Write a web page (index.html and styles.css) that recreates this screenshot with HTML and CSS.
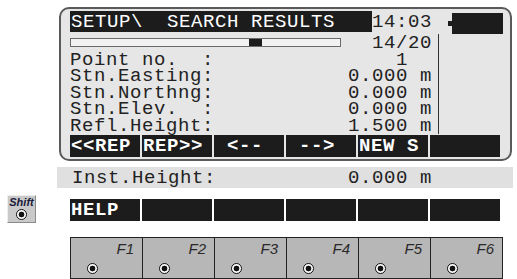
FILE: index.html
```html
<!DOCTYPE html>
<html lang="en">
<head>
  <meta charset="UTF-8">
  <title>Setup - Search Results</title>
  <link rel="stylesheet" href="styles.css">
</head>
<body>
  <div class="page">
    <section class="lcd">
      <div class="lcd-top">
        <div class="lcd-text">
          <div class="title-row">
            <div class="title">SETUP\  SEARCH RESULTS</div>
            <div class="clock">14:03</div>
          </div>
          <div class="row">
            <div class="progress"><span class="progress-mark" style="margin-left: 178px;"></span></div>
            <span>14/20</span>
          </div>
          <div class="row"><span>Point no.  :</span><span>1  </span></div>
          <div class="row"><span>Stn.Easting:</span><span>0.000 m</span></div>
          <div class="row"><span>Stn.Northng:</span><span>0.000 m</span></div>
          <div class="row"><span>Stn.Elev.  :</span><span>0.000 m</span></div>
          <div class="row"><span>Refl.Height:</span><span>1.500 m</span></div>
        </div>
        <div class="lcd-side">
          <div class="battery"><span class="battery-nub"></span><span class="battery-body"></span></div>
          <div class="side-line"></div>
        </div>
      </div>
      <div class="softkeys">
        <div class="softkey">&lt;&lt;REP</div>
        <div class="softkey">REP&gt;&gt;</div>
        <div class="softkey"> &lt;--</div>
        <div class="softkey"> --&gt;</div>
        <div class="softkey">NEW S</div>
        <div class="softkey"></div>
      </div>
    </section>

    <div class="inst-row">
      <div class="inst-text"><span>Inst.Height:</span><span>0.000 m</span></div>
    </div>

    <div class="shift-row">
      <div class="shift-key">
        <span class="shift-label">Shift</span>
        <i class="dot"></i>
      </div>
      <div class="softkeys help-keys">
        <div class="softkey">HELP</div>
        <div class="softkey"></div>
        <div class="softkey"></div>
        <div class="softkey"></div>
        <div class="softkey"></div>
        <div class="softkey"></div>
      </div>
    </div>

    <div class="fkeys">
      <div class="fkey"><span class="fkey-label">F1</span><i class="dot"></i></div>
      <div class="fkey"><span class="fkey-label">F2</span><i class="dot"></i></div>
      <div class="fkey"><span class="fkey-label">F3</span><i class="dot"></i></div>
      <div class="fkey"><span class="fkey-label">F4</span><i class="dot"></i></div>
      <div class="fkey"><span class="fkey-label">F5</span><i class="dot"></i></div>
      <div class="fkey"><span class="fkey-label">F6</span><i class="dot"></i></div>
    </div>
  </div>
</body>
</html>
```

FILE: styles.css
```css
* {
  margin: 0;
  padding: 0;
  box-sizing: border-box;
}

body {
  background: #ffffff;
  font-family: 'Liberation Mono', 'DejaVu Sans Mono', monospace;
  font-size: 19px;
  letter-spacing: 0.6px;
  color: #222;
}

.page {
  padding-top: 7px;
  width: 517px;
  height: 279px;
  overflow: hidden;
}

.lcd {
  margin-left: 59px;
  width: 453px;
  height: 154px;
  padding: 2px 0 0 9px;
  border: 2px solid #5a5a5a;
  border-radius: 10px;
  background: #e6e6e6;
}

.lcd-top {
  display: flex;
}

.lcd-text {
  width: 362px;
}

.title-row {
  display: flex;
  height: 21px;
  margin-bottom: 3px;
  line-height: 23px;
  white-space: pre;
}

.title {
  width: 302px;
  padding-left: 1px;
  background: #1c1c1c;
  color: #fff;
}

.clock {
  flex: 1;
  text-align: right;
}

.row {
  display: flex;
  justify-content: space-between;
  height: 16.5px;
  line-height: 16.5px;
  white-space: pre;
}

.progress {
  display: flex;
  align-self: flex-start;
  width: 271px;
  height: 9px;
  margin-top: 3px;
  border: 1px solid #6a6a6a;
  background: #f2f2f2;
}

.progress-mark {
  width: 13px;
  background: #1c1c1c;
}

.lcd-side {
  display: flex;
  flex-direction: column;
}

.battery {
  display: flex;
  align-items: center;
  height: 21px;
  margin: 2px 0 0 16px;
}

.battery-nub {
  width: 4px;
  height: 5px;
  background: #1c1c1c;
}

.battery-body {
  width: 51px;
  height: 21px;
  background: #1c1c1c;
}

.side-line {
  width: 1px;
  height: 100px;
  margin-left: 6px;
  background: #333;
}

.softkeys {
  display: grid;
  grid-template-columns: repeat(6, 70px);
  gap: 2px;
  height: 21px;
  margin-top: 1px;
}

.softkey {
  background: #1c1c1c;
  color: #fff;
  font-weight: bold;
  line-height: 22px;
  padding-left: 1px;
  white-space: pre;
}

.inst-row {
  margin: 6px 0 0 57px;
  width: 456px;
  height: 21px;
  padding-left: 15px;
  background: #e0e0e0;
  line-height: 22px;
}

.inst-text {
  display: flex;
  justify-content: space-between;
  width: 360px;
  white-space: pre;
}

.shift-row {
  display: flex;
  align-items: flex-start;
  margin-top: 7px;
}

.shift-key {
  display: flex;
  flex-direction: column;
  align-items: center;
  width: 29px;
  height: 28px;
  margin-left: 7px;
  border: 1px solid #8a8a8a;
  border-top-color: #eee;
  border-left-color: #eee;
  background: #c9c9c9;
}

.shift-label {
  font-family: 'Liberation Sans', Arial, sans-serif;
  font-size: 11px;
  font-weight: bold;
  font-style: italic;
  letter-spacing: 0;
  line-height: 13px;
  color: #1a1a3a;
}

.help-keys {
  margin: 4px 0 0 34px;
}

.dot {
  display: block;
  width: 11px;
  height: 11px;
  border: 1.5px solid #111;
  border-radius: 50%;
  background: radial-gradient(circle, #111 0 2.6px, #fff 3.2px);
}

.fkeys {
  display: grid;
  grid-template-columns: repeat(6, 1fr);
  gap: 1px;
  width: 433px;
  height: 42px;
  margin: 14px 0 0 70px;
  border: 1px solid #222;
  background: #222;
}

.fkey {
  display: flex;
  flex-direction: column;
  background: #b7b7b7;
}

.fkey-label {
  align-self: flex-end;
  padding: 3px 8px 0 0;
  font-family: 'Liberation Sans', Arial, sans-serif;
  font-size: 15px;
  font-style: italic;
  letter-spacing: 0;
  line-height: 16px;
  color: #2a2a2a;
}

.fkey .dot {
  margin: 6px 0 0 16px;
}
```
